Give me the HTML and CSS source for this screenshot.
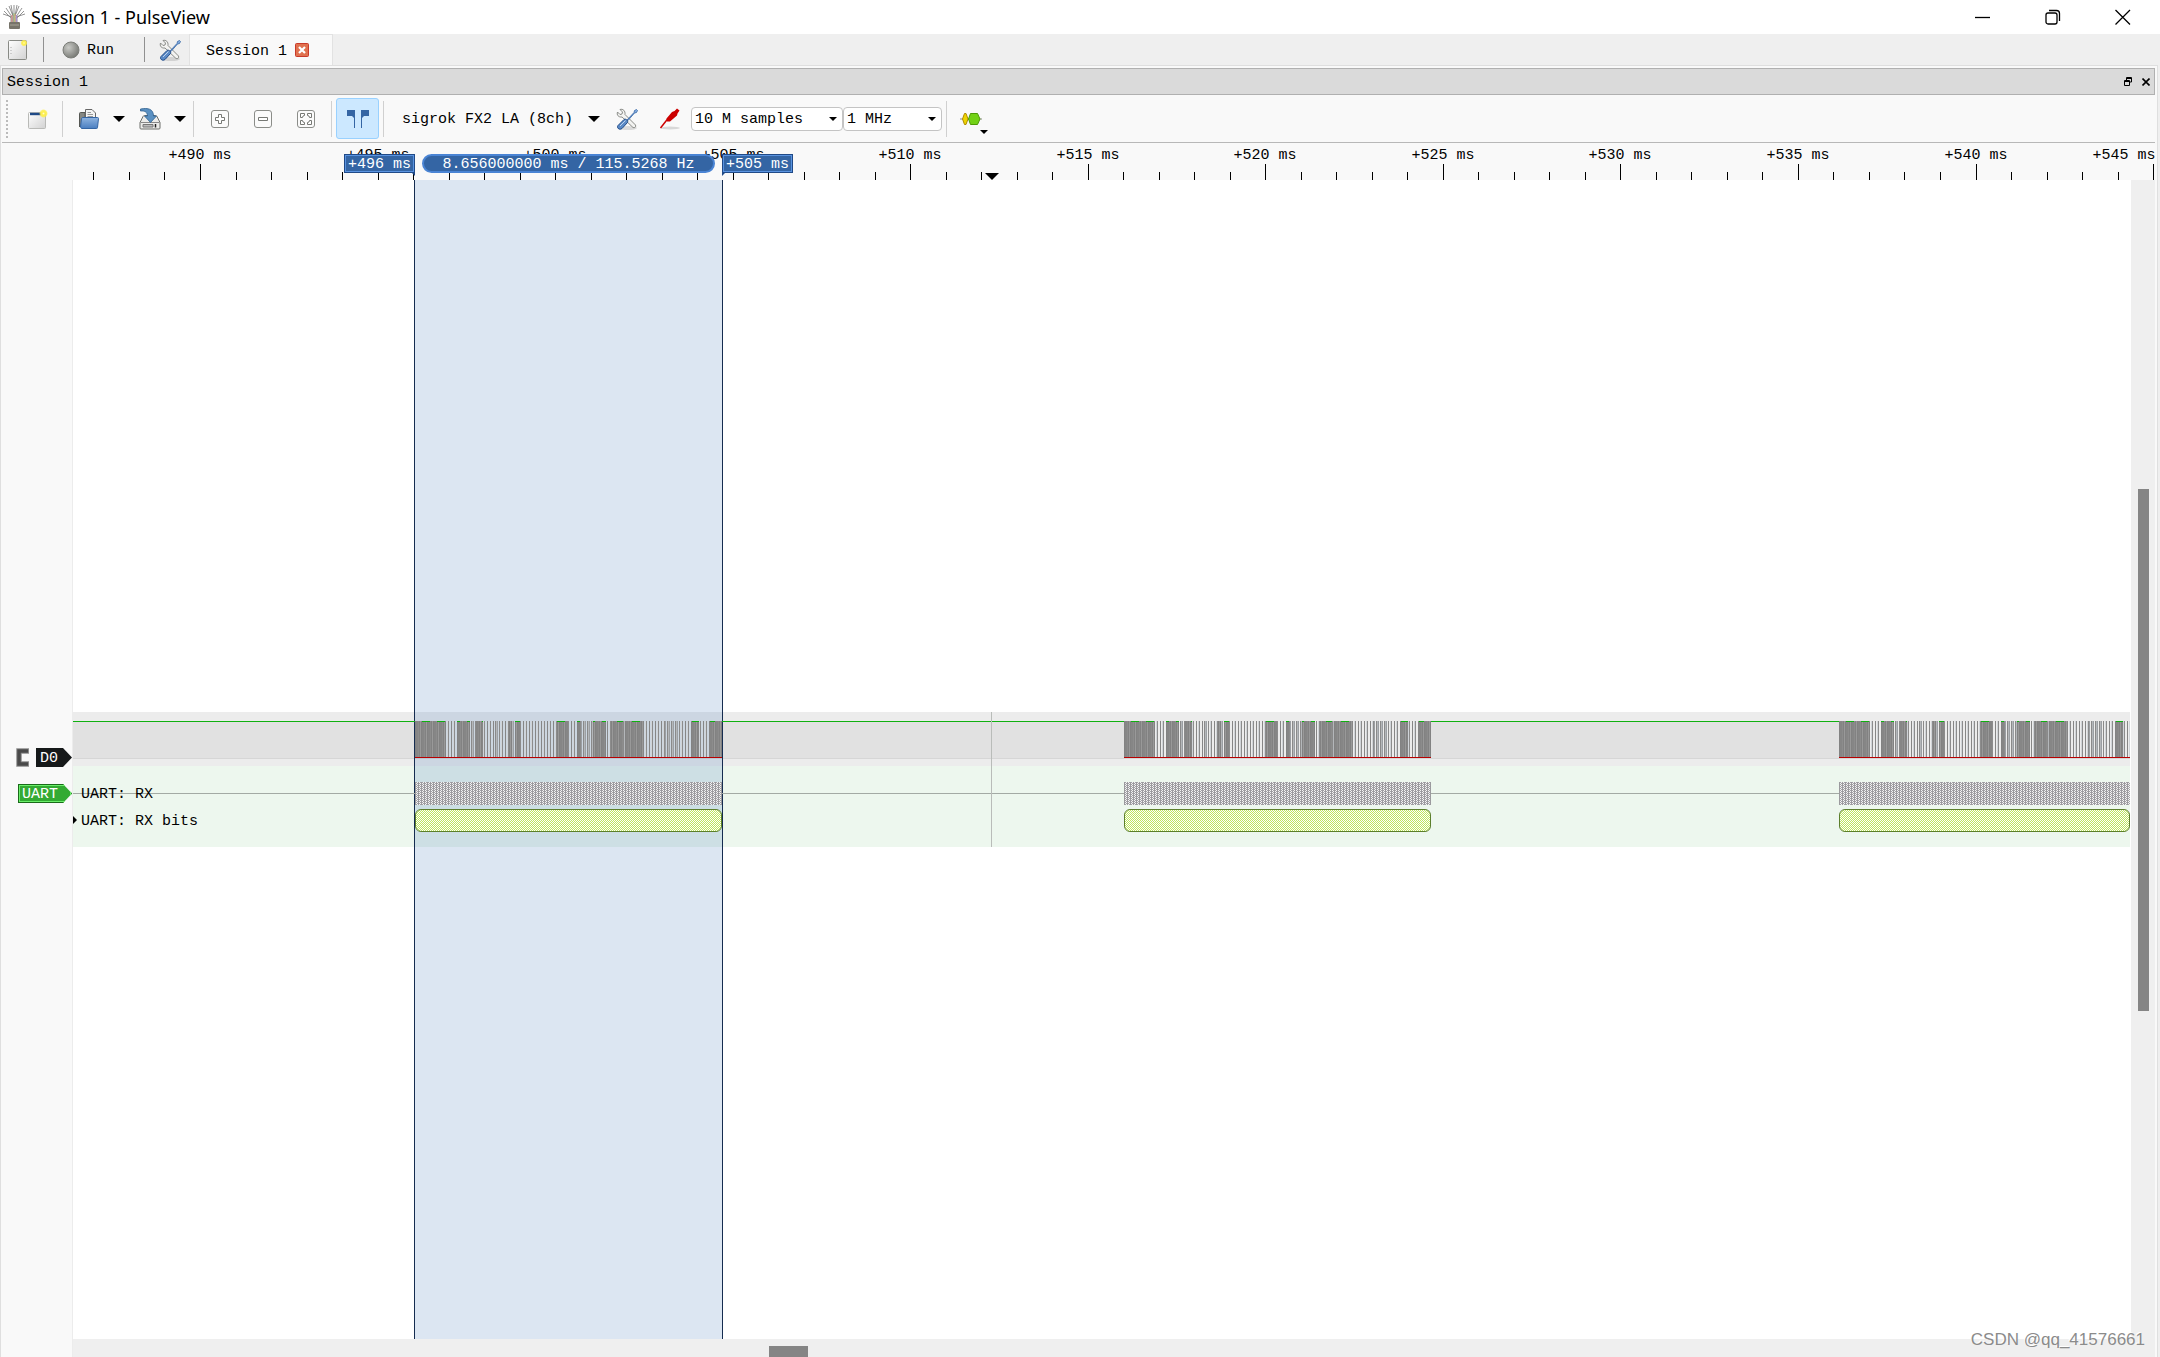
FILE: index.html
```html
<!DOCTYPE html>
<html lang="en">
<head>
<meta charset="utf-8">
<title>Session 1 - PulseView</title>
<link rel="stylesheet" href="styles.css">
</head>
<body>
<svg class="defs" aria-hidden="true">
  <defs>
    <linearGradient id="steel" x1="0" y1="0" x2="1" y2="1"><stop offset="0" stop-color="#fff"/><stop offset="1" stop-color="#d2d2d2"/></linearGradient>
    <linearGradient id="blue" x1="0" y1="0" x2="0" y2="1"><stop offset="0" stop-color="#8fb4e0"/><stop offset="1" stop-color="#4a7ec0"/></linearGradient>
    <radialGradient id="ball" cx=".35" cy=".35" r=".7"><stop offset="0" stop-color="#c9cac6"/><stop offset="1" stop-color="#777974"/></radialGradient>
    <radialGradient id="glow"><stop offset="0" stop-color="#fffbd0"/><stop offset=".35" stop-color="#fff04a"/><stop offset=".7" stop-color="#fcee4f" stop-opacity=".85"/><stop offset="1" stop-color="#fcee4f" stop-opacity="0"/></radialGradient>
    <symbol id="tools" viewBox="0 0 22 22">
      <ellipse cx="12" cy="20" rx="9" ry="2" fill="#000" opacity=".12"/>
      <path d="M4 1.500 6.500 4 6 6 4 6.500 1.500 4C.500 7 2.500 9.500 6 9L17 19.500c1.500 1 3.500-1 2.500-2.500L9 6.500C9.500 3 7 .500 4 1.500z" fill="#f3f3f1" stroke="#8a8c88"/>
      <path d="M11 12 18 4.500 18.500 2.500 20.500 1.500 21.500 2.500 20.500 4.500 18.500 5 12 12.500z" fill="#86aee0" stroke="#3465a4" stroke-width=".8"/>
      <path d="M2 17.500 8 11.500c1.500-1.200 4.500 1 3.500 3L6 20.500c-2 2-6-.5-4-3z" fill="#5b8ac6" stroke="#204a87"/>
      <path d="M4 18 9.500 12.500" stroke="#bdd2ee" fill="none"/>
    </symbol>
  </defs>
</svg>

<header class="titlebar">
  <svg class="app-icon" viewBox="0 0 22 26" aria-hidden="true">
    <g fill="none" stroke="#777" stroke-width=".8">
      <path d="M8 19 8 14 1 7M9 19 9 13 3 4M10 19 10 12 6 2M11 19V1M12 19 12 12 16 2M13 19 13 13 19 4M14 19 14 14 21 7M9 13 0 10M13 13 22 10M10 12 8 1M12 12 14 1"/>
    </g>
    <path d="M9 11V19" stroke="#d98a86" stroke-width="1.200"/><path d="M11 9V19" stroke="#8fbf7b"/><path d="M12 10V19" stroke="#e0b070"/><path d="M13.500 11V19" stroke="#a78fd0" stroke-width="1.200"/>
    <rect x="6" y="18" width="11" height="7" rx="1" fill="#77746a"/><path d="M7 21H16" stroke="#aaa698"/>
  </svg>
  <h1>Session 1 - PulseView</h1>
  <div class="window-buttons">
    <button type="button" aria-label="Minimize"><svg viewBox="0 0 16 16"><path d="M0 8.500H15"/></svg></button>
    <button type="button" aria-label="Restore"><svg viewBox="0 0 16 16"><rect x="1" y="4" width="11" height="11" rx="2"/><path d="M4 1.500H11.500Q14.500 1.500 14.500 4.500V12"/></svg></button>
    <button type="button" aria-label="Close"><svg viewBox="0 0 16 16"><path d="M.500 1 15 15.500M15 1 .500 15.500"/></svg></button>
  </div>
</header>

<nav class="main-tools">
  <button type="button" class="new-session" aria-label="New session">
    <svg width="20" height="22" viewBox="0 0 20 22"><rect x=".500" y="1.500" width="18" height="19" rx="1" fill="url(#steel)" stroke="#888a85"/><path d="M3 8V9M3 11V12M3 14V15" stroke="#aaa"/><circle cx="16" cy="4" r="3.500" fill="url(#glow)"/></svg>
  </button>
  <span class="rule"></span>
  <button type="button" class="run">
    <svg width="18" height="18" viewBox="0 0 18 18"><circle cx="9" cy="9" r="8" fill="url(#ball)" stroke="#7b7d78"/></svg><span>Run</span>
  </button>
  <span class="rule"></span>
  <button type="button" class="settings" aria-label="Settings"><svg width="22" height="22"><use href="#tools"/></svg></button>
  <div class="tab">
    <span>Session 1</span>
    <button type="button" aria-label="Close session"><svg width="14" height="14" viewBox="0 0 14 14"><rect x=".500" y=".500" width="13" height="13" rx="1" fill="#e0714f" stroke="#c93a2a"/><path d="M4 4 10 10M10 4 4 10" stroke="#fff" stroke-width="2.200"/></svg></button>
  </div>
</nav>

<main class="session">
  <div class="dock-title">
    <h2>Session 1</h2>
    <button type="button" aria-label="Float"><svg width="8" height="9" viewBox="0 0 8 9"><path d="M2.500 3V.500H7.500V5H6M.500 3.500H5.500V8.500H.500zM2 1.500H8M0 4.500H6" fill="none" stroke="#000"/></svg></button>
    <button type="button" aria-label="Close"><svg width="8" height="8" viewBox="0 0 8 8"><path d="M.500.500 7.500 7.500M7.500.500.500 7.500" stroke="#000" stroke-width="1.600"/></svg></button>
  </div>

  <div class="toolbar" role="toolbar" aria-label="Session tools">
    <span class="grip"></span>
    <button type="button" class="tool" aria-label="New view">
      <svg width="22" height="22" viewBox="0 0 22 22"><rect x="2.500" y="4.500" width="17" height="16" rx="1" fill="url(#steel)" stroke="#b9bab7"/><path d="M4 6H15" stroke="#204a87" stroke-width="2.400"/><circle cx="17.500" cy="5.500" r="4.500" fill="url(#glow)"/></svg>
    </button>
    <span class="rule"></span>
    <button type="button" class="tool" aria-label="Open">
      <svg width="22" height="22" viewBox="0 0 22 22"><path d="M1.500 19V5.500Q1.500 4.500 2.500 4.500H7V17" fill="#858783" stroke="#555753"/><path d="M7.500 11V1.500H14L17.500 5V11z" fill="#f4f4f3" stroke="#666"/><path d="M9.500 4.500H13M9.500 6.500H15M9.500 8.500H15" stroke="#999"/><path d="M3.500 20.500 2.500 19 3.500 10.500Q4 9.500 5 9.500H19.500Q20.500 9.500 20.500 10.500L19.500 19.500Q19.500 20.500 18.500 20.500z" fill="url(#blue)" stroke="#3465a4"/></svg>
    </button>
    <button type="button" class="drop" aria-label="Open menu"><i class="caret"></i></button>
    <button type="button" class="tool" aria-label="Save">
      <svg width="22" height="22" viewBox="0 0 22 22"><path d="M1 14.500 4 8.500Q4.500 7.500 5.500 7.500H16.500Q17.500 7.500 18 8.500L21 14.500V20Q21 21 20 21H2Q1 21 1 20z" fill="#ececea" stroke="#6c6e6a"/><path d="M1.500 14.500H20.500" stroke="#888"/><path d="M4 16.500H14V19H4z" fill="#bbb" stroke="#777"/><path d="M16.500 16V19.500" stroke="#222" stroke-width="1.500"/><path d="M1.500 1C9-.500 14.500 1 14.500 8H17.500L11.500 14.500 5.500 8H8.500C8.500 4.500 6 2.500 1.500 3z" fill="#5a90c2" stroke="#2f618f" stroke-width=".8"/></svg>
    </button>
    <button type="button" class="drop" aria-label="Save menu"><i class="caret"></i></button>
    <span class="rule"></span>
    <button type="button" class="tool" aria-label="Zoom in">
      <svg width="20" height="20" viewBox="0 0 20 20"><rect x="1.500" y="1.500" width="17" height="17" rx="2.500" fill="#fbfbfb" stroke="#8b8d89"/><path d="M8.500 5.500H11.500V8.500H14.500V11.500H11.500V14.500H8.500V11.500H5.500V8.500H8.500z" fill="#fff" stroke="#777975"/></svg>
    </button>
    <button type="button" class="tool" aria-label="Zoom out">
      <svg width="20" height="20" viewBox="0 0 20 20"><rect x="1.500" y="1.500" width="17" height="17" rx="2.500" fill="#fbfbfb" stroke="#8b8d89"/><path d="M5.500 8.500H14.500V11.500H5.500z" fill="#fff" stroke="#777975"/></svg>
    </button>
    <button type="button" class="tool" aria-label="Zoom to fit">
      <svg width="20" height="20" viewBox="0 0 20 20"><rect x="1.500" y="1.500" width="17" height="17" rx="2.500" fill="#fbfbfb" stroke="#8b8d89"/><path d="M4.500 8.500V4.500H8.500V6.500L7 7 6.500 8.500zM15.500 8.500V4.500H11.500V6.500L13 7 13.500 8.500zM4.500 11.500V15.500H8.500V13.500L7 13 6.500 11.500zM15.500 11.500V15.500H11.500V13.500L13 13 13.500 11.500z" fill="#fff" stroke="#777975"/></svg>
    </button>
    <span class="rule"></span>
    <button type="button" class="tool pressed" aria-label="Show cursors" aria-pressed="true">
      <svg width="22" height="20" viewBox="0 0 22 20"><path d="M0 1H8V19H7V9L5 7H0zM22 1H14V19H15V9L17 7H22z" fill="#3465a4"/></svg>
    </button>
    <span class="rule"></span>
    <button type="button" class="device"><span>sigrok FX2 LA (8ch)</span><i class="caret"></i></button>
    <button type="button" class="tool" aria-label="Configure device"><svg width="22" height="22"><use href="#tools"/></svg></button>
    <button type="button" class="tool" aria-label="Configure channels">
      <svg width="22" height="22" viewBox="0 0 22 22"><ellipse cx="11" cy="20" rx="10" ry="1.500" fill="#000" opacity=".13"/><path d="M1.500 20 9 10.500" stroke="#c00" stroke-width="1.500"/><path d="M7.500 10.500 13 4 15.500 3 18 .500 20.500 2.500 18.500 5.500 18 7.500 11 13.500 8 13.500z" fill="#c00"/></svg>
    </button>
    <label class="combo samples"><select aria-label="Sample count"><option>10 M samples</option></select><i class="caret small"></i></label>
    <label class="combo rate"><select aria-label="Sample rate"><option>1 MHz</option></select><i class="caret small"></i></label>
    <span class="rule"></span>
    <button type="button" class="tool decoder" aria-label="Add protocol decoder">
      <svg width="22" height="14" viewBox="0 0 22 14"><path d="M0 7H22" stroke="#888a85"/><path d="M4.500 1.500H6L8 7 6 12.500H4.500L2.500 7z" fill="#edd400" stroke="#b08b00"/><path d="M10.500 1.500H17.500L20 7 17.500 12.500H10.500L8.500 7z" fill="#73d216" stroke="#4e9a06"/></svg>
      <i class="caret small"></i>
    </button>
  </div>

  <section class="view">
    <div class="ruler" id="ruler">
      <div class="flag start">+496 ms</div>
      <div class="span">8.656000000 ms / 115.5268 Hz</div>
      <div class="flag end">+505 ms</div>
      <i class="hover"></i>
    </div>
    <aside class="channels">
      <div class="channel">
        <svg class="trigger" width="13" height="19" viewBox="0 0 13 19"><path d="M13 3H3V16H13" fill="none" stroke="#8c8c8c" stroke-width="5.500"/><path d="M12 3H3V16H12" fill="none" stroke="#4a4a4a" stroke-width="3.500"/></svg>
        <span class="tag logic"><span>D0</span></span>
      </div>
      <div class="channel"><span class="tag uart"><span>UART</span></span></div>
    </aside>
    <div class="canvas">
      <div class="traces">
        <div class="logic-row"></div>
        <div class="decode-row">
          <p>UART: RX</p>
          <p class="bits-label">UART: RX bits</p>
        </div>
      </div>
      <div class="selection"></div>
      <svg class="plot" id="plot" aria-hidden="true"></svg>
      <div class="bursts" id="bursts"></div>
    </div>
    <div class="vscroll"><div class="vthumb"></div></div>
    <div class="hscroll"><div class="hthumb"></div></div>
  </section>
</main>
<p class="watermark">CSDN @qq_41576661</p>
<script src="plot.js"></script>
</body>
</html>
```
FILE: styles.css
```css
* { box-sizing: border-box; }
html, body { height: 100%; }
body {
  --mono: "Liberation Mono", monospace;
  margin: 0;
  display: flex;
  flex-direction: column;
  overflow: hidden;
  background: #efefef;
  color: #000;
  font: 15px/20px var(--mono);
}
h1, h2, p { margin: 0; font-weight: normal; }
button { margin: 0; padding: 0; border: 0; background: none; font: inherit; color: inherit; display: flex; align-items: center; justify-content: center; }
svg { display: block; }
.defs { position: absolute; width: 0; height: 0; }
.run span, .tab span, .device span { padding-top: 3px; }

.titlebar { display: flex; align-items: center; flex: none; height: 34px; padding: 0 2px 0 3px; background: #fff; }
.titlebar h1 { flex: 1; font: 18px/32px "Noto Sans", sans-serif; }
.app-icon { width: 22px; height: 26px; margin-right: 6px; }
.window-buttons { display: flex; }
.window-buttons button { width: 70px; height: 34px; }
.window-buttons svg { width: 16px; height: 16px; fill: none; stroke: #000; stroke-width: 1.3; }

.main-tools { display: flex; align-items: center; flex: none; height: 31px; }
.main-tools .rule { width: 1px; height: 25px; background: #909090; }
.new-session { width: 43px; padding-left: 8px; justify-content: flex-start; }
.run { width: 100px; gap: 7px; padding-right: 12px; }
.settings { width: 44px; padding-left: 6px; }
.tab { display: flex; align-items: center; gap: 8px; height: 31px; padding: 0 23px 0 16px; background: #f9f9f9; border: 1px solid #e2e2e2; border-bottom: 0; }

.session { flex: 1; min-height: 0; display: flex; flex-direction: column; margin-right: 2px; padding: 2px 2px 0 1px; background: #f9f9f9; border: 1px solid #dfdfdf; border-bottom: 0; }
.dock-title { display: flex; align-items: center; flex: none; gap: 10px; height: 27px; padding: 0 4px; background: #dadada; border: 1px solid #b0b0b0; }
.dock-title h2 { flex: 1; padding-top: 3px; font: inherit; }

.toolbar { display: flex; align-items: center; flex: none; height: 48px; padding-left: 4px; border-bottom: 1px solid #b8b8b8; }
.toolbar .rule { width: 1px; height: 36px; margin: 0 4px; background: #d0d0d0; }
.grip { width: 2px; height: 38px; margin-right: 7px; background: repeating-linear-gradient(#bbb 0 2px, transparent 2px 4px); }
.tool { position: relative; width: 43px; height: 41px; padding-top: 1px; }
.tool.pressed { background: #cce8ff; border: 1px solid #99d1ff; border-radius: 3px; }
.drop { width: 18px; height: 41px; }
.caret { width: 0; height: 0; border: 6px solid transparent; border-top-color: #000; border-bottom: 0; }
.caret.small { border-width: 4px; border-bottom: 0; }
.device { width: 217px; height: 41px; padding: 0 5px 0 14px; justify-content: space-between; }
.combo { display: flex; align-items: center; height: 24px; margin-top: 1px; padding-right: 5px; background: #fff; border: 1px solid #c4c4c4; border-radius: 4px; }
.combo select { flex: 1; min-width: 0; padding: 2px 0 0 3px; border: 0; background: none; appearance: none; font: inherit; color: inherit; }
.samples { width: 152px; }
.rate { width: 99px; }
.decoder { padding-right: 4px; }
.decoder .caret { position: absolute; right: 6px; bottom: 5px; }

.view { flex: 1; min-height: 0; display: grid; grid-template: 37px 1fr 18px / 71px 1fr 24px; }
.ruler { position: relative; grid-area: 1 / 2 / 2 / 4; overflow: hidden; }
.ruler svg { position: absolute; inset: 0; width: 100%; height: 100%; }
.ruler .label { position: absolute; top: 3px; transform: translateX(-50%); white-space: pre; }
.flag, .span { position: absolute; z-index: 1; top: 11px; height: 19px; line-height: 19px; text-align: center; background: #3465a4; border: 1px solid #204a87; box-shadow: inset 0 0 0 1px #5a93e0; color: #fff; white-space: pre; }
.flag { width: 71px; }
.flag::after { content: ""; position: absolute; top: 17px; border-top: 4px solid #204a87; }
.start { left: 271px; }
.start::after { right: -1px; border-left: 4px solid transparent; }
.end { left: 649px; }
.end::after { left: -1px; border-right: 4px solid transparent; }
.span { left: 349px; width: 293px; border: 2px solid #4a84d4; border-radius: 10px; line-height: 17px; box-shadow: none; }
.hover { position: absolute; left: 912px; bottom: 0; border: 7px solid transparent; border-top-color: #000; border-bottom: 0; }

.channels { grid-area: 2 / 1 / 4 / 2; padding-top: 568px; border-right: 1px solid #ececec; }
.channel { display: flex; justify-content: flex-end; gap: 7px; height: 19px; margin-bottom: 17px; }
.tag { height: 19px; padding: 1px 11px 1px 1px; background: #000; clip-path: polygon(0 0, calc(100% - 9px) 0, 100% 50%, calc(100% - 9px) 100%, 0 100%); line-height: 19px; color: #fff; }
.tag span { display: block; padding: 0 3px; }
.logic { background: #16191a; }
.uart { background: #3a3; box-shadow: inset 0 0 0 1px #1a6b1a, inset 0 0 0 2px #6aef6a; }

.canvas { position: relative; grid-area: 2 / 2; background: #fff; overflow: hidden; }
.traces { position: absolute; top: 532px; left: 0; right: 1px; }
.logic-row { height: 54px; padding-top: 10px; background: #ececec; }
.logic-row::before { content: ""; display: block; height: 36px; background: #e1e1e1; border-bottom: 1px solid #d6d6d6; }
.decode-row { height: 81px; padding: 15px 8px; background: #edf7ee; line-height: 27px; }
.decode-row p { position: relative; z-index: 3; }
.bits-label::before { content: ""; position: absolute; left: -8px; top: 8px; border: 4px solid transparent; border-left-color: #000; border-right: 0; }
.selection { position: absolute; top: 0; bottom: 0; left: 341px; width: 309px; background: rgba(46, 108, 180, .17); border: solid #152c50; border-width: 0 1px; }
.plot { position: absolute; top: 532px; left: 0; width: 100%; height: 135px; }
.rx, .bits { position: absolute; height: 23px; }
.rx { top: 602px; background: repeating-linear-gradient(90deg, #9b9a9e 0 1px, transparent 1px 3px), repeating-conic-gradient(#a2a1a6 0 25%, #f2f2f2 0 50%) 0 0 / 2px 2px; }
.bits { top: 629px; border: 1px solid #5c7f2c; border-radius: 6px; background: repeating-conic-gradient(#bfe65e 0 25%, #fff 0 50%) 0 0 / 2px 2px; }

.vscroll { grid-area: 2 / 3 / 4 / 4; display: grid; grid-template-rows: 309fr 522fr 346fr; padding-left: 7px; background: #efefef; }
.vthumb { grid-row: 2; width: 11px; background: #858585; }
.hscroll { grid-area: 3 / 2; padding: 7px 0 0 696px; background: #efefef; }
.hthumb { width: 39px; height: 11px; background: #858585; }
.watermark { position: absolute; right: 15px; bottom: 7px; font: 17px/20px "Liberation Sans", sans-serif; color: #8b8b8b; text-shadow: -1px -1px 0 #fff; }
```
FILE: plot.js
```
// Time scale of the view: 35.51 px per millisecond, 490 ms at x = 127.
const SCALE = 35.51;
const xOf = ms => 127.5 + (ms - 490) * SCALE;
const bursts = [496.05, 516.02, 536.16];
const LENGTH = 8.656;

// Edge density inside one burst: [end px, d = dense, m = medium, s = sparse]
const zones = [[31,'d'],[42,'s'],[55,'d'],[61,'m'],[68,'d'],[79,'s'],[85,'m'],[93,'s'],[97,'d'],[100,'m'],[105,'d'],[141,'s'],[154,'d'],[162,'s'],[166,'d'],[178,'m'],[191,'d'],[196,'s'],[208,'d'],[210,'m'],[228,'d'],[250,'s'],[265,'m'],[276,'s'],[284,'d'],[295,'s'],[308,'d']];
const shades = {
  d: ['#828282', '#868686', '#868686', '#8c8c8c', '#828282', '#999'],
  m: ['#8a8a8a', '#b4b7ba', '#9b9fa3', null],
  s: ['#868686', null, '#d0d4d8', '#8c8c8c', null, null]
};

const ruler = document.getElementById('ruler');
const plot = document.getElementById('plot');
const layer = document.getElementById('bursts');
const width = document.querySelector('.canvas').clientWidth - 1;

let ticks = '';
for (let ms = 487; xOf(ms) < ruler.clientWidth; ms++) {
  const major = ms % 5 === 0;
  ticks += `<rect x="${Math.floor(xOf(ms))}" y="${major ? 21 : 29}" width="1" height="${major ? 16 : 8}"/>`;
  if (major) {
    const label = document.createElement('span');
    label.className = 'label';
    label.textContent = `+${ms} ms`;
    label.style.left = Math.min(Math.floor(xOf(ms)), ruler.clientWidth - 31) + 'px';
    ruler.append(label);
  }
}
ruler.insertAdjacentHTML('afterbegin', `<svg>${ticks}</svg>`);

let shapes = '';
let idle = 0;
for (const start of bursts) {
  const from = Math.floor(xOf(start));
  const to = Math.min(Math.floor(xOf(start + LENGTH)), width);
  const ground = start === bursts[0] ? '#ccd6e0' : '#ececec';
  shapes += `<rect x="${idle}" y="9" width="${from - idle}" height="1" fill="#10b010"/><rect x="${idle}" y="81" width="${from - idle}" height="1" fill="#a3aaa4"/>`;
  shapes += `<rect x="${from}" y="9" width="${to - from}" height="36" fill="${ground}"/>`;
  idle = to;
  let z = 0;
  for (let i = 0; i < to - from; i++) {
    while (i >= zones[z][0] && z < zones.length - 1) z++;
    const kind = zones[z][1];
    const fill = shades[kind][i % shades[kind].length];
    if (fill) shapes += `<rect x="${from + i}" y="9" width="1" height="36" fill="${fill}"/>`;
    if (kind === 'd' && i % 15 > 6) shapes += `<rect x="${from + i}" y="9" width="1" height="1" fill="#10b010"/>`;
  }
  shapes += `<rect x="${from}" y="45" width="${to - from}" height="1" fill="#b80000"/>`;
  for (const kind of ['rx', 'bits']) {
    const box = document.createElement('div');
    box.className = kind;
    box.style.left = from + 'px';
    box.style.width = to - from + 'px';
    layer.append(box);
  }
}
if (idle < width) shapes += `<rect x="${idle}" y="9" width="${width - idle}" height="1" fill="#10b010"/>`;
shapes += '<rect x="918" y="0" width="1" height="135" fill="#b9bcb9"/>';
plot.innerHTML = shapes;
```
